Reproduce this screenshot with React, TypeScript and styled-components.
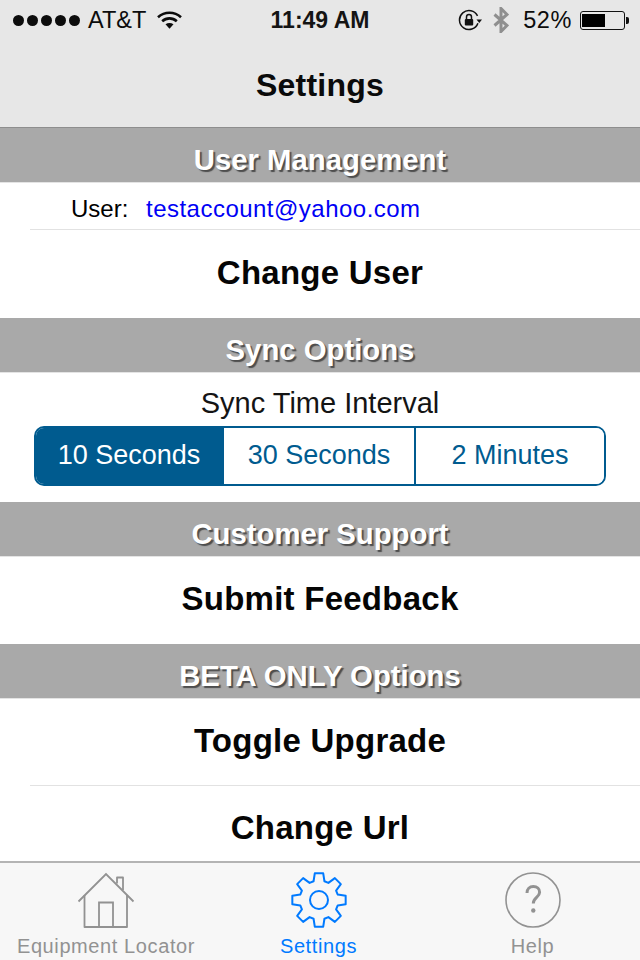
import React from "react";
import styled, { createGlobalStyle } from "styled-components";

const Global = createGlobalStyle`
  html, body { margin: 0; padding: 0; background: #fff; }
  body { font-family: "Liberation Sans", Arial, sans-serif; -webkit-font-smoothing: antialiased; }
`;

const Page = styled.div`
  width: 640px;
  height: 960px;
  display: flex;
  flex-direction: column;
  overflow: hidden;
  background: #fff;
`;

const Top = styled.header`
  height: 128px;
  box-sizing: border-box;
  background: #e7e7e7;
  border-bottom: 1px solid #8e8e8e;
  display: flex;
  flex-direction: column;
  flex: none;
`;

const StatusBar = styled.div`
  height: 40px;
  display: grid;
  grid-template-columns: 1fr auto 1fr;
  align-items: center;
  padding: 0 13px;
  color: #0c0c0c;
  font-size: 23.5px;
`;

const StatusGroup = styled.div<{ $end?: boolean }>`
  display: flex;
  align-items: center;
  justify-content: ${(p) => (p.$end ? "flex-end" : "flex-start")};
`;

const Signal = styled.span`
  display: flex;
  gap: 3px;
  margin-right: 8px;
`;

const Dot = styled.span`
  width: 11px;
  height: 11px;
  border-radius: 50%;
  background: #0c0c0c;
`;

const Clock = styled.span`
  font-weight: 700;
  font-size: 23px;
  color: #141414;
`;

const Carrier = styled.span`
  margin-right: 11px;
`;

const Percent = styled.span`
  margin: 0 8px 0 14px;
  font-size: 23.5px;
  letter-spacing: 0.6px;
`;

const Battery = styled.span`
  display: block;
  width: 45px;
  height: 19px;
  box-sizing: border-box;
  border: 1px solid #111;
  border-radius: 3px;
  padding: 2px 1px;
  position: relative;
  margin-right: 2px;
  &::after {
    content: "";
    position: absolute;
    right: -5px;
    top: 5px;
    width: 3px;
    height: 7px;
    background: #111;
    border-radius: 0 2px 2px 0;
  }
`;

const BatteryFill = styled.span`
  display: block;
  height: 100%;
  background: #000;
`;

const NavTitle = styled.h1`
  margin: 0;
  flex: 1;
  display: flex;
  align-items: center;
  justify-content: center;
  font-size: 32px;
  font-weight: 700;
  color: #0a0a0a;
  letter-spacing: 0.2px;
  padding-top: 3px;
`;

const Content = styled.main`
  flex: 1;
  min-height: 0;
  display: flex;
  flex-direction: column;
`;

const SectionHeader = styled.div`
  height: 54px;
  flex: none;
  background: #a9a9a9;
  color: #fff;
  display: flex;
  align-items: center;
  justify-content: center;
  font-size: 29.3px;
  font-weight: 700;
  text-shadow: 2px 2px 1px #4d4d4d;
  box-sizing: border-box;
  padding-top: 9px;
  box-shadow: 0 1px 0 #e4e4e4;
`;

const UserRow = styled.div`
  height: 48px;
  box-sizing: border-box;
  margin-left: 30px;
  padding-left: 41px;
  display: flex;
  align-items: center;
  font-size: 24px;
  color: #000;
  border-bottom: 1px solid #e2e2e2;
  flex: none;
  padding-top: 7px;
`;

const UserLabel = styled.span`
  font-size: 24px;
  width: 75px;
`;

const UserEmail = styled.span`
  color: #0000f5;
  letter-spacing: 0.48px;
`;

const ActionRow = styled.div<{ $h: number; $line?: boolean; $shift: number }>`
  height: ${(p) => p.$h}px;
  flex: none;
  box-sizing: border-box;
  position: relative;
  display: flex;
  align-items: center;
  justify-content: center;
  font-size: 33px;
  font-weight: 700;
  letter-spacing: 0.25px;
  color: #050505;
  padding-top: ${(p) => (p.$shift > 0 ? p.$shift : 0)}px;
  padding-bottom: ${(p) => (p.$shift < 0 ? -p.$shift : 0)}px;
  ${(p) =>
    p.$line
      ? `&::after { content: ""; position: absolute; left: 30px; right: 0; bottom: 0; height: 1px; background: #e2e2e2; }`
      : ""}
`;

const SyncBlock = styled.div`
  height: 130px;
  flex: none;
  box-sizing: border-box;
  padding: 15px 34px 0;
  display: flex;
  flex-direction: column;
  align-items: stretch;
`;

const SyncLabel = styled.div`
  font-size: 29px;
  line-height: 32px;
  color: #141414;
  text-align: center;
`;

const Segmented = styled.div`
  margin-top: 7px;
  height: 60px;
  box-sizing: border-box;
  border: 2px solid #005b8f;
  border-radius: 10px;
  display: grid;
  grid-template-columns: 188px 192px 1fr;
  overflow: hidden;
`;

const Segment = styled.div<{ $active?: boolean; $last?: boolean }>`
  display: flex;
  align-items: center;
  justify-content: center;
  font-size: 27px;
  padding-bottom: 2px;
  background: ${(p) => (p.$active ? "#005b8f" : "#fff")};
  color: ${(p) => (p.$active ? "#fff" : "#005b8f")};
  border-right: ${(p) => (p.$last ? "0" : "2px solid #005b8f")};
`;

const TabBar = styled.nav`
  height: 99px;
  flex: none;
  box-sizing: border-box;
  background: #f7f7f7;
  border-top: 2px solid #b4b4b4;
  display: grid;
  grid-template-columns: 212px 213px 1fr;
`;

const Tab = styled.div<{ $active?: boolean }>`
  display: flex;
  flex-direction: column;
  align-items: center;
  padding-top: 6px;
  color: ${(p) => (p.$active ? "#007aff" : "#929292")};
  font-size: 20px;
  letter-spacing: 0.6px;
`;

const TabIcon = styled.svg`
  width: 60px;
  height: 60px;
  display: block;
  flex: none;
`;

const TabLabel = styled.span`
  line-height: 24px;
  margin-top: 5px;
  white-space: nowrap;
`;

const StatusIcon = styled.svg<{ $w: number; $h: number; $gap?: number }>`
  width: ${(p) => p.$w}px;
  height: ${(p) => p.$h}px;
  margin-left: ${(p) => p.$gap ?? 0}px;
  display: block;
  flex: none;
`;

const gearPath = (() => {
  const cx = 30, cy = 31, teeth = 8, ro = 27, ri = 19.5;
  const pts: string[] = [];
  for (let i = 0; i < teeth; i++) {
    const a = ((i * 360) / teeth - 90) * (Math.PI / 180);
    const step = (2 * Math.PI) / teeth;
    const seq: [number, number][] = [
      [ri, a - step * 0.36],
      [ro, a - step * 0.2],
      [ro, a + step * 0.2],
      [ri, a + step * 0.36],
    ];
    seq.forEach(([r, t]) => pts.push(`${(cx + r * Math.cos(t)).toFixed(2)} ${(cy + r * Math.sin(t)).toFixed(2)}`));
  }
  return "M" + pts.join("L") + "Z";
})();

export default function App() {
  return (
    <Page>
      <Global />
      <Top>
        <StatusBar>
          <StatusGroup>
            <Signal>
              {[0, 1, 2, 3, 4].map((i) => (
                <Dot key={i} />
              ))}
            </Signal>
            <Carrier>AT&amp;T</Carrier>
            <StatusIcon $w={25} $h={18} viewBox="0 0 25 18" fill="none" stroke="#0c0c0c" strokeWidth={2.6}>
              <path d="M1 6.2C7.5 .2 17.5 .2 24 6.2" />
              <path d="M5.2 10.2c4.2-3.8 10.4-3.8 14.6 0" />
              <path d="M12.5 17.8l-4-4.6c2.4-1.6 5.6-1.6 8 0z" fill="#0c0c0c" stroke="none" />
            </StatusIcon>
          </StatusGroup>
          <Clock>11:49 AM</Clock>
          <StatusGroup $end>
            <StatusIcon $w={24} $h={22} viewBox="0 0 24 22" fill="none">
              <path d="M20.5 11A9.5 9.5 0 1 1 17.6 4.2" stroke="#111" strokeWidth="1.5" transform="rotate(20 11 11)" />
              <path d="M18.5 10.5h5.5l-2.7 3.4z" fill="#111" />
              <rect x="6.8" y="10" width="8.4" height="6.5" rx="1" fill="#111" />
              <path d="M8.5 10V8a2.5 2.5 0 0 1 5 0v2" stroke="#111" strokeWidth="1.5" />
            </StatusIcon>
            <StatusIcon $w={16} $h={26} $gap={11} viewBox="0 0 16 26" fill="none" stroke="#8f8f8f" strokeWidth="3">
              <path d="M1.5 7.5L14 18.5L8 24.5V1.5L14 7.5L1.5 18.5" />
            </StatusIcon>
            <Percent>52%</Percent>
            <Battery>
              <BatteryFill style={{ width: "55%" }} />
            </Battery>
          </StatusGroup>
        </StatusBar>
        <NavTitle>Settings</NavTitle>
      </Top>
      <Content>
        <SectionHeader>User Management</SectionHeader>
        <UserRow>
          <UserLabel>User:</UserLabel>
          <UserEmail>testaccount@yahoo.com</UserEmail>
        </UserRow>
        <ActionRow $h={88} $shift={-3}>Change User</ActionRow>
        <SectionHeader>Sync Options</SectionHeader>
        <SyncBlock>
          <SyncLabel>Sync Time Interval</SyncLabel>
          <Segmented>
            <Segment $active>10 Seconds</Segment>
            <Segment>30 Seconds</Segment>
            <Segment $last>2 Minutes</Segment>
          </Segmented>
        </SyncBlock>
        <SectionHeader>Customer Support</SectionHeader>
        <ActionRow $h={88} $shift={-2}>Submit Feedback</ActionRow>
        <SectionHeader>BETA ONLY Options</SectionHeader>
        <ActionRow $h={88} $line $shift={-2}>Toggle Upgrade</ActionRow>
        <ActionRow $h={75} $shift={9}>Change Url</ActionRow>
      </Content>
      <TabBar>
        <Tab>
          <TabIcon viewBox="0 0 60 60" fill="none" stroke="#929292" strokeWidth="1.8">
            <path d="M2.5 32.5L30 5L57.5 32.5" />
            <path d="M8.5 26V58H51V26" strokeLinejoin="round" />
            <path d="M23 58V33.5H37V58" />
            <path d="M41 14.5V8.5H47V21" strokeLinejoin="round" />
          </TabIcon>
          <TabLabel>Equipment Locator</TabLabel>
        </Tab>
        <Tab $active>
          <TabIcon viewBox="0 0 60 60" fill="none" stroke="#007aff" strokeWidth="2">
            <path d={gearPath} strokeLinejoin="round" />
            <circle cx="30" cy="31" r="9" />
          </TabIcon>
          <TabLabel>Settings</TabLabel>
        </Tab>
        <Tab>
          <TabIcon viewBox="0 0 60 60" fill="none" stroke="#929292" strokeWidth="1.6">
            <circle cx="30" cy="31" r="27" />
            <path d="M24 24c0-4 2.600-6.500 6.300-6.500c3.800 0 6.300 2.300 6.300 5.700c0 5.300-6.300 5.300-6.300 11.300" strokeWidth="3" />
            <circle cx="30.3" cy="41.500" r="2.200" fill="#929292" stroke="none" />
          </TabIcon>
          <TabLabel>Help</TabLabel>
        </Tab>
      </TabBar>
    </Page>
  );
}
